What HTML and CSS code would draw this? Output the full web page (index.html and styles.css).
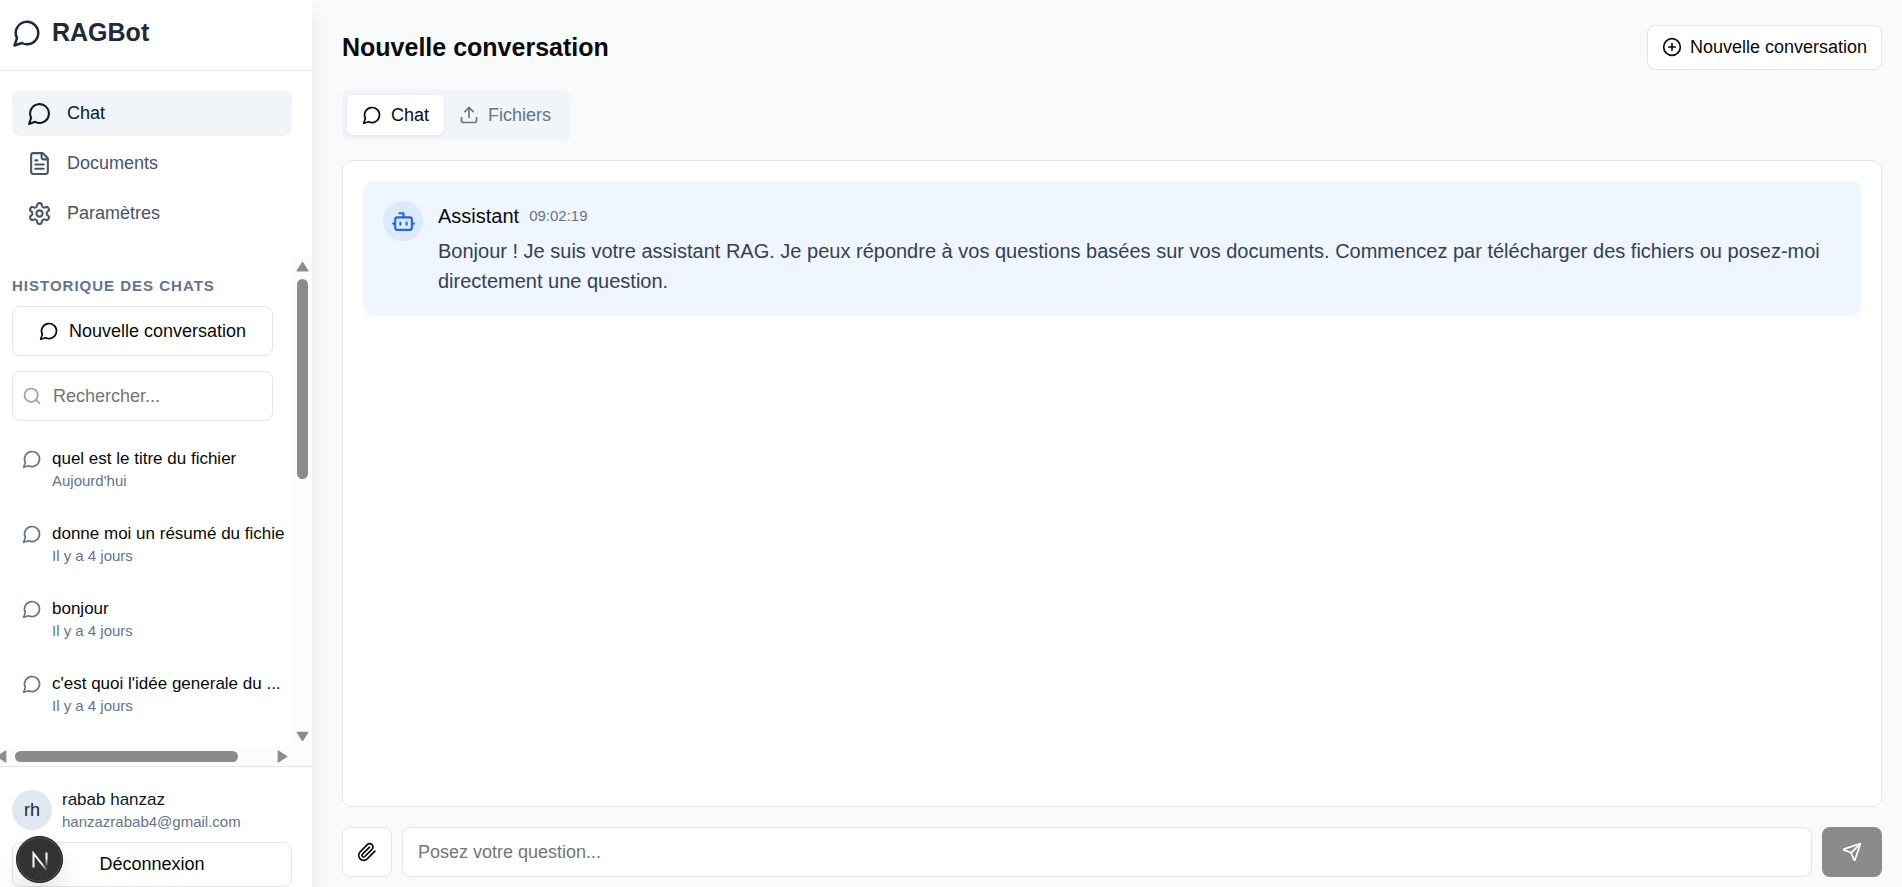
FILE: index.html
```
<!DOCTYPE html>
<html lang="fr">
<head>
<meta charset="utf-8">
<title>RAGBot</title>
<meta name="viewport" content="width=device-width, initial-scale=1">
<link rel="stylesheet" href="styles.css">
</head>
<body>
<svg class="sprite" aria-hidden="true">
  <symbol id="message" viewBox="0 0 24 24"><path d="M7.9 20A9 9 0 1 0 4 16.1L2 22Z"/></symbol>
  <symbol id="file" viewBox="0 0 24 24"><path d="M15 2H6a2 2 0 0 0-2 2v16a2 2 0 0 0 2 2h12a2 2 0 0 0 2-2V7Z"/><path d="M14 2v4a2 2 0 0 0 2 2h4"/><path d="M10 9H8"/><path d="M16 13H8"/><path d="M16 17H8"/></symbol>
  <symbol id="settings" viewBox="0 0 24 24"><path d="M12.22 2h-.44a2 2 0 0 0-2 2v.18a2 2 0 0 1-1 1.73l-.43.25a2 2 0 0 1-2 0l-.15-.08a2 2 0 0 0-2.73.73l-.22.38a2 2 0 0 0 .73 2.73l.15.1a2 2 0 0 1 1 1.72v.51a2 2 0 0 1-1 1.74l-.15.09a2 2 0 0 0-.73 2.73l.22.38a2 2 0 0 0 2.73.73l.15-.08a2 2 0 0 1 2 0l.43.25a2 2 0 0 1 1 1.73V20a2 2 0 0 0 2 2h.44a2 2 0 0 0 2-2v-.18a2 2 0 0 1 1-1.73l.43-.25a2 2 0 0 1 2 0l.15.08a2 2 0 0 0 2.73-.73l.22-.39a2 2 0 0 0-.73-2.73l-.15-.08a2 2 0 0 1-1-1.74v-.5a2 2 0 0 1 1-1.74l.15-.09a2 2 0 0 0 .73-2.73l-.22-.38a2 2 0 0 0-2.73-.73l-.15.08a2 2 0 0 1-2 0l-.43-.25a2 2 0 0 1-1-1.73V4a2 2 0 0 0-2-2z"/><circle cx="12" cy="12" r="3"/></symbol>
  <symbol id="search" viewBox="0 0 24 24"><circle cx="11" cy="11" r="8"/><path d="m21 21-4.3-4.3"/></symbol>
  <symbol id="plus" viewBox="0 0 24 24"><circle cx="12" cy="12" r="10"/><path d="M8 12h8"/><path d="M12 8v8"/></symbol>
  <symbol id="upload" viewBox="0 0 24 24"><path d="M21 15v4a2 2 0 0 1-2 2H5a2 2 0 0 1-2-2v-4"/><path d="m17 8-5-5-5 5"/><path d="M12 3v12"/></symbol>
  <symbol id="bot" viewBox="0 0 24 24"><path d="M12 8V4H8"/><rect width="16" height="12" x="4" y="8" rx="2"/><path d="M2 14h2"/><path d="M20 14h2"/><path d="M15 13v2"/><path d="M9 13v2"/></symbol>
  <symbol id="clip" viewBox="0 0 24 24"><path d="m21.44 11.05-9.19 9.19a6 6 0 0 1-8.49-8.49l8.57-8.57A4 4 0 1 1 18 8.84l-8.59 8.57a2 2 0 0 1-2.83-2.83l8.49-8.48"/></symbol>
  <symbol id="send" viewBox="0 0 24 24"><path d="M14.536 21.686a.5.5 0 0 0 .937-.024l6.5-19a.496.496 0 0 0-.635-.635l-19 6.5a.5.5 0 0 0-.024.937l7.93 3.18a2 2 0 0 1 1.112 1.11z"/><path d="m21.854 2.147-10.94 10.939"/></symbol>
  <symbol id="arrow" viewBox="0 0 12 10"><path d="M6 1 11 9H1Z"/></symbol>
</svg>
<div class="app">
  <aside class="sidebar">
    <header class="brand">
      <svg class="icon icon-xl"><use href="#message"/></svg>
      <span class="brand-name">RAGBot</span>
    </header>
    <nav class="nav">
      <a class="nav-link active" href="#"><svg class="icon icon-lg"><use href="#message"/></svg><span class="nav-label">Chat</span></a>
      <a class="nav-link" href="#"><svg class="icon icon-lg"><use href="#file"/></svg><span class="nav-label">Documents</span></a>
      <a class="nav-link" href="#"><svg class="icon icon-lg"><use href="#settings"/></svg><span class="nav-label">Paramètres</span></a>
    </nav>
    <section class="history">
      <div class="history-view">
        <h2 class="history-title">Historique des chats</h2>
        <button class="btn btn-new" type="button"><svg class="icon icon-md"><use href="#message"/></svg>Nouvelle conversation</button>
        <label class="search">
          <svg class="icon icon-md"><use href="#search"/></svg>
          <input class="search-input" type="text" placeholder="Rechercher..." aria-label="Rechercher">
        </label>
        <ul class="chats">
          <li><a class="chat" href="#"><svg class="icon icon-md"><use href="#message"/></svg><span class="chat-text"><span class="chat-name">quel est le titre du fichier</span><span class="small">Aujourd'hui</span></span></a></li>
          <li><a class="chat" href="#"><svg class="icon icon-md"><use href="#message"/></svg><span class="chat-text"><span class="chat-name">donne moi un résumé du fichie</span><span class="small">Il y a 4 jours</span></span></a></li>
          <li><a class="chat" href="#"><svg class="icon icon-md"><use href="#message"/></svg><span class="chat-text"><span class="chat-name">bonjour</span><span class="small">Il y a 4 jours</span></span></a></li>
          <li><a class="chat" href="#"><svg class="icon icon-md"><use href="#message"/></svg><span class="chat-text"><span class="chat-name">c'est quoi l'idée generale du ...</span><span class="small">Il y a 4 jours</span></span></a></li>
        </ul>
      </div>
      <div class="scroll-v" aria-hidden="true">
        <svg class="arrow"><use href="#arrow"/></svg>
        <div class="track-v"><div class="thumb-v"></div></div>
        <svg class="arrow arrow-down"><use href="#arrow"/></svg>
      </div>
      <div class="scroll-h" aria-hidden="true">
        <svg class="arrow arrow-left"><use href="#arrow"/></svg>
        <div class="track-h"><div class="thumb-h"></div></div>
        <svg class="arrow arrow-right"><use href="#arrow"/></svg>
      </div>
    </section>
    <footer class="account">
      <div class="user">
        <span class="avatar">rh</span>
        <span class="user-text"><span class="user-name">rabab hanzaz</span><span class="small">hanzazrabab4@gmail.com</span></span>
      </div>
      <button class="btn btn-logout" type="button">Déconnexion</button>
      <button class="dev-badge" type="button" aria-label="Outils de développement">
        <svg class="dev-mark" viewBox="0 0 40 40">
          <defs>
            <linearGradient id="fade-a" x1="0" y1="12" x2="0" y2="27" gradientUnits="userSpaceOnUse"><stop offset="0.4" stop-color="#fff"/><stop offset="1" stop-color="#fff" stop-opacity="0"/></linearGradient>
            <linearGradient id="fade-b" x1="19" y1="20" x2="28" y2="31" gradientUnits="userSpaceOnUse"><stop offset="0.3" stop-color="#fff"/><stop offset="1" stop-color="#fff" stop-opacity="0"/></linearGradient>
          </defs>
          <path d="M13.5 27.5V13.5L26.5 30" stroke="url(#fade-b)"/>
          <path d="M26.5 12.5V27" stroke="url(#fade-a)"/>
        </svg>
      </button>
    </footer>
  </aside>
  <main class="main">
    <header class="main-head">
      <h1 class="title">Nouvelle conversation</h1>
      <button class="btn btn-head" type="button"><svg class="icon icon-md"><use href="#plus"/></svg>Nouvelle conversation</button>
    </header>
    <div class="tabs" role="tablist">
      <button class="tab selected" type="button" role="tab" aria-selected="true"><svg class="icon icon-md"><use href="#message"/></svg>Chat</button>
      <button class="tab" type="button" role="tab" aria-selected="false"><svg class="icon icon-md"><use href="#upload"/></svg>Fichiers</button>
    </div>
    <section class="thread">
      <article class="message">
        <span class="bot"><svg class="icon icon-lg"><use href="#bot"/></svg></span>
        <div class="message-body">
          <div class="message-head"><span class="author">Assistant</span><time class="small">09:02:19</time></div>
          <p class="message-text">Bonjour ! Je suis votre assistant RAG. Je peux répondre à vos questions basées sur vos documents. Commencez par télécharger des fichiers ou posez-moi directement une question.</p>
        </div>
      </article>
    </section>
    <form class="composer">
      <button class="btn btn-attach" type="button" aria-label="Joindre un fichier"><svg class="icon icon-md"><use href="#clip"/></svg></button>
      <input class="question" type="text" placeholder="Posez votre question..." aria-label="Votre question">
      <button class="btn-send" type="submit" aria-label="Envoyer" disabled><svg class="icon icon-md"><use href="#send"/></svg></button>
    </form>
  </main>
</div>
</body>
</html>
```
FILE: styles.css
```
*, *::before, *::after { box-sizing: border-box; }

body {
  margin: 0;
  background: #f8fafc;
  color: #0a0a0a;
  font-family: "Liberation Sans", Arial, sans-serif;
  font-size: 18px;
  line-height: 24px;
}

button, input { font: inherit; color: inherit; }
a { color: inherit; text-decoration: none; }
h1, h2, p, ul { margin: 0; padding: 0; }
ul { list-style: none; }

.sprite { display: none; }
.icon {
  flex: none;
  fill: none;
  stroke: currentColor;
  stroke-width: 2;
  stroke-linecap: round;
  stroke-linejoin: round;
}
.icon-md { width: 20px; height: 20px; }
.icon-lg { width: 25px; height: 25px; }
.icon-xl { width: 30px; height: 30px; }

.small { color: #64748b; font-size: 15px; line-height: 20px; }

.app { display: flex; height: 100vh; overflow: hidden; }

/* Sidebar */
.sidebar {
  display: flex;
  flex: none;
  flex-direction: column;
  width: 312px;
  background: #fff;
  box-shadow: 0 12px 18px rgba(0, 0, 0, 0.08);
  z-index: 1;
}
.brand {
  display: flex;
  align-items: center;
  gap: 10px;
  height: 71px;
  padding: 0 12px 4px;
  border-bottom: 1px solid #e2e8f0;
  color: #1e293b;
}
.brand-name { padding-bottom: 2px; font-size: 25px; font-weight: 700; line-height: 34px; }

.nav { display: flex; flex-direction: column; gap: 5px; padding: 20px 20px 20px 12px; }
.nav-link {
  display: flex;
  align-items: center;
  gap: 15px;
  height: 45px;
  padding: 0 15px;
  border-radius: 8px;
  color: #475569;
}
.nav-label { padding-bottom: 2px; }
.nav-link.active { background: #f1f5f9; color: #0f172a; }

.history {
  display: grid;
  flex: 1;
  grid-template: minmax(0, 1fr) 19px / minmax(0, 1fr) 19px;
  min-height: 0;
  background: #fcfcfc;
}
.history-view {
  display: flex;
  flex-direction: column;
  padding: 20px 20px 0 12px;
  overflow: hidden;
  background: #fff;
}
.history-title {
  padding-bottom: 10px;
  color: #64748b;
  font-size: 15px;
  font-weight: 700;
  letter-spacing: 1px;
  line-height: 20px;
  text-transform: uppercase;
}
.btn {
  display: flex;
  align-items: center;
  justify-content: center;
  gap: 10px;
  padding: 0 15px;
  border: 1px solid #e5e5e5;
  border-radius: 8px;
  background: #fff;
}
.btn-new { height: 50px; }
.search { display: flex; align-items: center; gap: 11px; height: 50px; margin-top: 15px; padding: 0 9px; border: 1px solid #e5e5e5; border-radius: 8px; color: #94a3b8; }
.search-input { flex: 1; min-width: 0; padding: 0; border: 0; outline: 0; background: none; color: #0a0a0a; }
input::placeholder { color: #757575; opacity: 1; }

.chats { padding-top: 16px; }
.chat { display: flex; gap: 10px; height: 75px; padding: 10px; color: #64748b; }
.chat .icon { margin-top: 2px; }
.chat-text, .user-text { display: flex; flex-direction: column; white-space: nowrap; }
.chat-name { color: #0a0a0a; font-size: 17px; }

.scroll-v { display: flex; flex-direction: column; align-items: center; padding: 5px 0; }
.track-v { flex: 1; padding: 7px 0; }
.thumb-v { width: 11px; height: 200px; border-radius: 6px; background: #8b8b8b; }
.scroll-h { display: flex; align-items: center; overflow: hidden; }
.track-h { flex: 1; padding: 0 7px; }
.thumb-h { width: 223px; height: 11px; border-radius: 6px; background: #8b8b8b; }
.arrow { flex: none; width: 13px; height: 11px; fill: #8b8b8b; stroke: #8b8b8b; stroke-width: 1; stroke-linejoin: round; }
.arrow-down { transform: rotate(180deg); }
.arrow-left { margin-left: -5px; transform: rotate(-90deg); }
.arrow-right { margin-right: 4px; transform: rotate(90deg); }

.account {
  position: relative;
  display: flex;
  flex-direction: column;
  gap: 10px;
  padding: 20px 20px 0 12px;
  border-top: 1px solid #e2e8f0;
}
.user { display: flex; align-items: center; gap: 10px; height: 45px; }
.avatar {
  display: grid;
  place-items: center;
  width: 40px;
  height: 40px;
  border-radius: 50%;
  background: #e2e8f0;
  color: #1e293b;
}
.user-name { color: #0f172a; font-size: 17px; }
.btn-logout { height: 45px; padding-bottom: 2px; }
.dev-badge {
  position: absolute;
  bottom: 4px;
  left: 16px;
  display: grid;
  place-items: center;
  width: 47px;
  height: 47px;
  padding: 0;
  border: 1px solid #111;
  border-radius: 50%;
  background: #333;
  box-shadow: inset 0 0 0 1px #555, 0 16px 32px -8px rgba(0, 0, 0, 0.24);
}
.dev-mark { width: 40px; height: 40px; fill: none; stroke-width: 2; }

/* Conversation */
.main {
  display: flex;
  flex: 1;
  flex-direction: column;
  gap: 20px;
  min-width: 0;
  padding: 25px 20px 10px 30px;
}
.main-head { display: flex; align-items: center; justify-content: space-between; }
.title { font-size: 25px; font-weight: 700; line-height: 35px; }
.btn-head { height: 45px; padding: 0 14px 2px; gap: 8px; }

.tabs {
  display: flex;
  align-self: flex-start;
  height: 50px;
  padding: 5px;
  border-radius: 8px;
  background: #f1f5f9;
}
.tab {
  display: flex;
  align-items: center;
  gap: 9px;
  padding: 0 15px;
  border: 0;
  border-radius: 6px;
  background: none;
  color: #64748b;
}
.tab.selected { background: #fff; box-shadow: 0 1px 3px rgba(0, 0, 0, 0.08); color: #0a0a0a; }

.thread { flex: 1; min-height: 0; padding: 20px; border: 1px solid #e2e8f0; border-radius: 10px; background: #fff; }
.message { display: flex; gap: 15px; padding: 20px; border-radius: 10px; background: #eff6ff; }
.bot {
  display: grid;
  flex: none;
  place-items: center;
  width: 40px;
  height: 40px;
  border-radius: 50%;
  background: #dbeafe;
  color: #2563eb;
}
.message-head { display: flex; align-items: center; gap: 10px; height: 30px; margin-bottom: 5px; }
.author { font-size: 20px; }
.message-text { color: #334155; font-size: 20px; line-height: 30px; }

.composer { display: flex; gap: 10px; height: 50px; }
.btn-attach { width: 50px; padding: 0; }
.question { flex: 1; min-width: 0; padding: 0 15px; border: 1px solid #e5e5e5; border-radius: 8px; outline: 0; background: #fff; }
.btn-send {
  display: grid;
  place-items: center;
  width: 60px;
  padding: 0;
  border: 0;
  border-radius: 8px;
  background: #8a8b8c;
  color: #fff;
}
```
